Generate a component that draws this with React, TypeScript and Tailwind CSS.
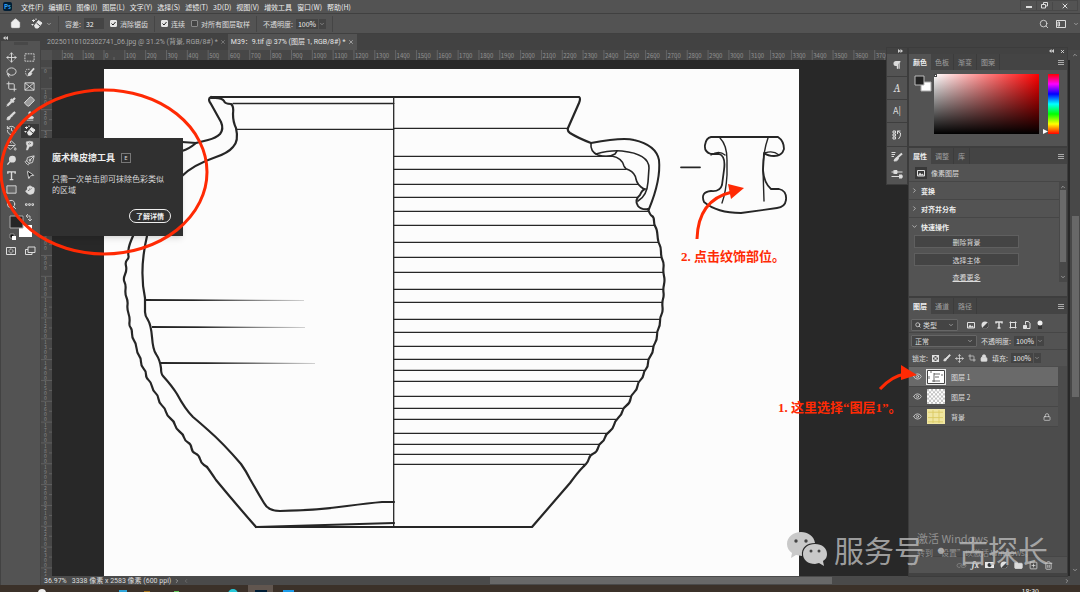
import type { ReactNode } from "react";
import {
  Bandage,
  Brush,
  ChevronDown,
  ChevronRight,
  ChevronUp,
  ChevronLeft,
  Crop,
  Ellipsis,
  Eye,
  Folder,
  Hand,
  History,
  House,
  Lasso,
  Link,
  Lock,
  MousePointer2,
  Move,
  PaintBucket,
  PenTool,
  Pilcrow,
  Pipette,
  Pointer,
  Search,
  SquareDashed,
  SquarePlus,
  Stamp,
  Trash2,
  X,
} from "lucide-react";

const menus = [
  "文件(F)", "编辑(E)", "图像(I)", "图层(L)", "文字(Y)", "选择(S)",
  "滤镜(T)", "3D(D)", "视图(V)", "增效工具", "窗口(W)", "帮助(H)",
];

const INK = "#262626";
const RULER_STEP = 20.83;

// outer edge of the vessel, left section and right elevation
const leftProfile: [number, number][] = [
  [133, 236], [129, 245], [128, 254], [129, 258], [125, 262], [127, 270], [123, 279], [126, 285],
  [125, 294], [128, 301], [127, 309], [130, 318], [129, 326], [132, 329], [132, 338], [136, 343],
  [137, 353], [141, 358], [141, 366], [146, 371], [146, 378], [151, 382], [153, 391], [158, 395],
  [159, 403], [165, 408], [167, 416], [174, 421], [176, 429], [183, 434], [185, 441], [191, 444],
  [192, 452], [199, 455], [201, 463], [207, 467],
];

const rightProfile: [number, number][] = [
  [648, 209], [650, 215], [654, 217], [654, 225], [657, 229], [658, 242], [661, 247], [661, 257],
  [664, 263], [663, 272], [665, 280], [663, 289], [664, 296], [662, 302], [663, 312], [660, 317],
  [660, 326], [657, 331], [657, 340], [653, 346], [653, 353], [648, 359], [648, 367], [644, 371],
  [643, 378], [638, 382], [637, 390], [631, 395], [630, 403], [623, 408], [622, 414], [615, 421],
  [613, 429], [606, 434], [604, 441], [599, 444], [597, 452], [590, 455], [588, 462], [584, 466],
];

// [y, right end] of every groove on the right half
const grooves = [
  [128, 568], [156, 613], [169, 626], [184, 638], [197, 637], [211, 649], [225, 654], [242, 658],
  [257, 661], [272, 663], [289, 663], [302, 662], [319, 660], [332, 657], [346, 653], [359, 648],
  [370, 644], [381, 638], [396, 631], [408, 623], [419, 616], [433, 607], [444, 599], [454, 590],
  [464, 585],
];

function smooth(points: [number, number][]) {
  let d = `M${points[0][0]} ${points[0][1]}`;
  for (let i = 1; i < points.length - 1; i++) {
    const [x, y] = points[i];
    const [nx, ny] = points[i + 1];
    d += ` Q${x} ${y} ${(x + nx) / 2} ${(y + ny) / 2}`;
  }
  const last = points[points.length - 1];
  return `${d} L${last[0]} ${last[1]}`;
}

function Drawing() {
  return (
    <svg
      className="block h-[507px] w-[695px] shrink-0 bg-[#fcfcfc]"
      viewBox="104 69 695 507"
      fill="none"
      stroke={INK}
      strokeLinejoin="round"
      strokeLinecap="round"
    >
      <defs>
        <linearGradient id="fade" x1="0" x2="1">
          <stop offset="0.3" stopColor={INK} />
          <stop offset="1" stopColor={INK} stopOpacity="0.2" />
        </linearGradient>
      </defs>
      <g strokeWidth="1.3">
        {grooves.map(([y, end]) => (
          <path key={y} d={`M394 ${y + 0.3}H${end}`} />
        ))}
        <path d="M233 103.5H394M237 129.3H394M393.7 97V526" />
      </g>
      <g strokeWidth="2.2">
        <path d="M212 97H579Q581 98 579 103L568 128Q567 131 570 133Q578 138 591 143" />
        <path d="M211 97Q207 99 211 104L221 122Q224 129 220 134Q216 138 208 140Q200 142 196 143L182 142" />
        <path d="M182 151Q189 149 196 143" />
        <path d="M211 98Q222 97 224 101Q225 104 231 104Q234 106 233 114Q233 122 236 128Q239 141 233 147Q228 153 216 157Q193 165 182 176" />
        <path d={smooth(leftProfile)} />
        <path d="M207 467Q210 471 216 480Q235 503 256 527" />
        <path d="M147 236Q139 270 145 298V312Q145 316 148 320Q151 325 152 337Q153 350 156 354Q160 360 161 368Q161 374 163 376Q172 386 177 394Q185 409 193 417Q199 422 208 430Q223 443 241 464Q246 471 250 479Q258 493 264 503Q268 511 280 511Q320 510 347 506Q370 503 382 502H394" />
        <path d="M256 527L394 523" />
        <path d="M256 527H532L570 483Q578 472 584 466" />
        <path d={smooth(rightProfile)} />
      </g>
      <g strokeWidth="2">
        <path d="M591 143Q623 137 634 140Q656 145 659 160Q661 180 649 209Q641 210 638 206Q634 200 640 195Q642 190 645 189" />
        <path d="M591 143Q590 152 598 155Q608 158 615 154L617 151" strokeWidth="1.6" />
        <path d="M596 154Q610 150 622 151Q649 154 649 168L648 182Q647 196 638 201" strokeWidth="1.6" />
        <path d="M612 156Q622 158 624 166Q625 169 629 170Q635 173 636 179Q637 185 644 189" strokeWidth="1.6" />
      </g>
      <g fill="url(#fade)" stroke="none">
        <path d="M146 299L304 300V301L146 301Z" />
        <path d="M152 326L305 327V328L152 328Z" />
        <path d="M160 362L315 363V364L160 364Z" />
      </g>
      <g strokeWidth="1.8">
        <path d="M681 167.3H700" />
        <path d="M711 137H778Q784 141 784 149Q782 156 774 156Q768 156 764 153L763 170Q764 183 771 189H779Q787 191 786 200Q785 207 777 208L741 213Q717 213 704 202Q700 192 711 191Q720 192 722 185L724 170Q726 156 719 154H711Q704 152 705 145Q706 138 711 137" />
        <path d="M720 138Q727 145 727 160V175Q726 192 722 203M768 138Q763 152 763 170L764 201M711 155Q719 150 725 155M765 153Q773 150 779 155" strokeWidth="1.4" />
      </g>
    </svg>
  );
}

function TopRuler() {
  const marks = Array.from({ length: 48 }, (_, i) => i - 2);
  return (
    <svg className="block h-[10px] min-w-0 flex-1 bg-[#474747]" fontSize="6" fill="#929292">
      {marks.map((n) => (
        <g key={n}>
          <path d={`M${52 + n * RULER_STEP} 0V10M${62 + n * RULER_STEP} 7V10`} stroke="#666" />
          <text x={53 + n * RULER_STEP} y="8">
            {Math.abs(n * 100)}
          </text>
        </g>
      ))}
    </svg>
  );
}

function SideRuler() {
  const marks = Array.from({ length: 25 }, (_, i) => i);
  return (
    <svg className="block h-full w-[11px] shrink-0 bg-[#474747]" fontSize="5" fill="#8a8a8a">
      {marks.map((n) => (
        <g key={n}>
          <path d={`M0 ${8 + n * RULER_STEP}H11M8 ${18 + n * RULER_STEP}H11`} stroke="#606060" />
          {String(n * 100).split("").map((digit, i) => (
            <text key={i} x="3" y={13 + n * RULER_STEP + i * 5}>
              {digit}
            </text>
          ))}
        </g>
      ))}
    </svg>
  );
}

function MagicEraser() {
  return (
    <svg className="h-3 w-3" viewBox="0 0 24 24" fill="none" stroke="#e8e8e8" strokeWidth="2">
      <path d="M7 15L15 5l7 5-8 10H9z" fill="#e8e8e8" />
      <path d="M11 10l7 6" stroke="#444" />
      <path d="M5 3v5M2 5h6M3 12v3M1 13h4M10 1v3" />
    </svg>
  );
}

const tool = "h-[11px] w-[11px]";
const solid = "h-[10px] w-[10px] fill-[#dcdcdc]";

const tools: { name: string; icon: ReactNode }[] = [
  { name: "移动", icon: <Move className={tool} /> },
  {
    name: "选框",
    icon: (
      <svg className={tool} viewBox="0 0 24 24" fill="none" stroke="currentColor" strokeWidth="2">
        <path d="M2 4h20v16H2z" strokeDasharray="4 2" />
      </svg>
    ),
  },
  { name: "套索", icon: <Lasso className={tool} /> },
  {
    name: "快速选择",
    icon: (
      <svg className={tool} viewBox="0 0 24 24" fill="none" stroke="currentColor" strokeWidth="2">
        <path d="M12 5H6Q2 9 4 15T10 19" strokeDasharray="3 2" />
        <path d="M22 3L14 12" strokeWidth="4" />
        <path d="M14 11q-5 1-5 8 7 0 8-5z" fill="currentColor" />
      </svg>
    ),
  },
  { name: "裁剪", icon: <Crop className={tool} /> },
  {
    name: "图框",
    icon: (
      <svg className={tool} viewBox="0 0 24 24" fill="none" stroke="currentColor" strokeWidth="2">
        <path d="M2 4h20v16H2zM2 4l20 16M22 4L2 20" />
      </svg>
    ),
  },
  { name: "吸管", icon: <Pipette className={solid} /> },
  { name: "修复画笔", icon: <Bandage className="h-[11px] w-[11px] -rotate-45 fill-[#999]" /> },
  { name: "画笔", icon: <Brush className={solid} /> },
  { name: "仿制图章", icon: <Stamp className={solid} /> },
  { name: "历史记录画笔", icon: <History className={tool} /> },
  { name: "魔术橡皮擦", icon: <MagicEraser /> },
  { name: "油漆桶", icon: <PaintBucket className={tool} /> },
  {
    name: "涂抹",
    icon: (
      <svg className={tool} viewBox="0 0 24 24" fill="currentColor" stroke="currentColor">
        <path d="M5 4q8-3 14 0 2 5-1 9-3 2-6 1l-4 8H5l2-9q-3-4-2-9z" />
        <path d="M9 8l3 1M12 6l3 2" stroke="#555" strokeWidth="2" />
      </svg>
    ),
  },
  {
    name: "减淡",
    icon: (
      <svg className={tool} viewBox="0 0 24 24" stroke="currentColor" strokeWidth="3">
        <circle cx="14" cy="9" r="6" fill="currentColor" />
        <path d="M9 14l-6 7" />
      </svg>
    ),
  },
  { name: "钢笔", icon: <PenTool className="h-[11px] w-[11px] rotate-90" /> },
  {
    name: "文字",
    icon: (
      <svg className={tool} viewBox="0 0 24 24" fill="none" stroke="currentColor" strokeWidth="3">
        <path d="M4 8V4h16v4M12 4v17M8 21h8" />
      </svg>
    ),
  },
  { name: "路径选择", icon: <MousePointer2 className="h-[10px] w-[10px] rotate-12 fill-[#222]" /> },
  {
    name: "矩形",
    icon: (
      <svg className={tool} viewBox="0 0 24 24" fill="#666" stroke="currentColor" strokeWidth="2">
        <path d="M2 4h20v16H2z" />
      </svg>
    ),
  },
  { name: "抓手", icon: <Hand className={solid} /> },
  { name: "缩放", icon: <Search className={tool} /> },
  { name: "更多", icon: <Ellipsis className="h-[11px] w-[11px] stroke-[4px]" /> },
];

function Toolbar() {
  return (
    <aside className="flex w-[41px] shrink-0 flex-col border-x border-[#424242] bg-[#535353] text-[#dcdcdc]">
      <div className="flex h-[7px] shrink-0 items-center bg-[#424242] pl-0.5">
        <DoubleArrow />
      </div>
      <div className="mx-auto mt-px h-[3px] w-[14px] shrink-0 bg-[#484848]" />
      <div className="mx-px mt-[5px] grid h-[162px] shrink-0 grid-cols-2 grid-rows-11">
        {tools.map(({ name, icon }) => (
          <button
            key={name}
            aria-label={name}
            className={
              name === "魔术橡皮擦"
                ? "flex min-h-0 items-center justify-center bg-[#383838]"
                : "flex min-h-0 items-center justify-center"
            }
          >
            {icon}
          </button>
        ))}
      </div>
      <svg className="mt-px ml-[7px] h-[28px] w-[26px] shrink-0" viewBox="0 0 26 28" fill="none" stroke="#dcdcdc">
        <path d="M11 12h13v12H11z" fill="#fff" stroke="none" />
        <path d="M2 3h13v12H2z" fill="#262626" stroke="#aaa" />
        <path d="M19 3h3v5M20 1l-2 2 2 2M20 6l2 2 2-2" strokeWidth="0.8" />
        <path d="M2 21h4v4H2z" fill="#111" strokeWidth="0.5" />
        <path d="M4 23h4v4H4z" fill="#fff" stroke="none" />
      </svg>
      <div className="mx-px mt-1 grid grid-cols-2">
        <button aria-label="快速蒙版" className="flex items-center justify-center">
          <svg className="h-3 w-3" viewBox="0 0 24 24" fill="none" stroke="currentColor" strokeWidth="2">
            <path d="M3 5h18v14H3z" />
            <circle cx="12" cy="12" r="4" strokeDasharray="2 1" />
          </svg>
        </button>
        <button aria-label="屏幕模式" className="flex items-center justify-center">
          <svg className="h-3 w-3" viewBox="0 0 24 24" fill="none" stroke="currentColor" strokeWidth="2">
            <path d="M8 4h14v11H8zM8 9H3v10h13v-4" />
          </svg>
        </button>
      </div>
    </aside>
  );
}

function DoubleArrow({ right = false }: { right?: boolean }) {
  return (
    <svg className="h-1 w-[5px]" viewBox="0 0 10 8" fill="#d0d0d0">
      <path d={right ? "M0 0l5 4-5 4zM5 0l5 4-5 4z" : "M5 0L0 4l5 4zM10 0L5 4l5 4z"} />
    </svg>
  );
}

function Check({ label, checked = false }: { label: string; checked?: boolean }) {
  return (
    <label className="flex items-center gap-[3px]">
      <span className="grid h-[7px] w-[7px]">
        <input
          type="checkbox"
          defaultChecked={checked}
          className="peer col-start-1 row-start-1 appearance-none rounded-[1px] border border-[#8a8a8a] bg-[#444] checked:border-[#e4e4e4] checked:bg-[#e4e4e4]"
        />
        <svg
          className="pointer-events-none col-start-1 row-start-1 hidden h-[7px] w-[7px] peer-checked:block"
          viewBox="0 0 14 14"
          fill="none"
          stroke="#222"
          strokeWidth="2"
        >
          <path d="M3 7l3 3 5-6" />
        </svg>
      </span>
      {label}
    </label>
  );
}

function Percent({ label, id }: { label: string; id: string }) {
  return (
    <div className="flex items-center gap-[3px]">
      <label htmlFor={id}>{label}</label>
      <div className="flex h-[10px] items-center bg-[#444] text-[#f0f0f0]">
        <input id={id} defaultValue="100%" className="h-full w-[22px] bg-transparent pl-0.5" />
        <span className="flex h-full w-[8px] items-center justify-center border-l border-[#555]">
          <ChevronDown className="h-[6px] w-[6px] text-[#bbb]" />
        </span>
      </div>
    </div>
  );
}

function Separator() {
  return <span className="h-4 w-px bg-[#454545]" />;
}

function PanelTabs({ names }: { names: string[] }) {
  return (
    <div className="flex h-4 shrink-0 items-stretch bg-[#444] text-[#a0a0a0]">
      {names.map((name, i) => (
        <button
          key={name}
          className={
            i === 0
              ? "bg-[#535353] px-1 font-bold text-[#eee]"
              : "border-r border-[#3c3c3c] px-1"
          }
        >
          {name}
        </button>
      ))}
      <svg className="mr-[3px] ml-auto h-[5px] w-[6px] self-center" viewBox="0 0 12 10" stroke="#aaa" strokeWidth="2">
        <path d="M0 1h12M0 5h12M0 9h12" />
      </svg>
    </div>
  );
}

function ColorPanel() {
  return (
    <section className="flex h-[94px] shrink-0 flex-col border-b-2 border-[#3e3e3e]">
      <PanelTabs names={["颜色", "色板", "渐变", "图案"]} />
      <div className="flex pt-1 pl-[5px]">
        <svg className="h-[18px] w-[18px]" viewBox="0 0 18 18">
          <path d="M7 8h10v9H7z" fill="#fff" stroke="#aaa" />
          <path d="M1 2h9v9H1z" fill="#222" stroke="#bbb" />
        </svg>
        <div className="ml-0.5 h-[60px] w-[105px] bg-[linear-gradient(to_bottom,transparent,#000),linear-gradient(to_right,#fff,#f00)]">
          <div className="h-[3px] w-[3px] border border-[#444] bg-white" />
        </div>
        <svg className="ml-1 h-[5px] w-[5px] self-end" viewBox="0 0 10 10">
          <path d="M0 0l10 5L0 10z" fill="#fff" />
        </svg>
        <div className="h-[60px] w-[11px] bg-[linear-gradient(to_bottom,#f00,#f0f,#00f,#0ff,#0f0,#ff0,#f00)]" />
      </div>
    </section>
  );
}

function PropertiesPanel() {
  return (
    <section className="flex h-[150px] shrink-0 flex-col border-b-2 border-[#3e3e3e]">
      <PanelTabs names={["属性", "调整", "库"]} />
      <div className="flex h-[18px] shrink-0 items-center gap-1 border-b border-[#464646] pl-1.5">
        <span className="flex h-3 w-3 items-center justify-center bg-[#383838]">
          <PictureIcon />
        </span>
        像素图层
      </div>
      <div className="flex">
        <div className="flex-1">
          {["变换", "对齐并分布"].map((name) => (
            <button
              key={name}
              className="flex h-[18px] w-full items-center gap-[3px] border-b border-[#464646] pl-0.5 font-bold text-[#eee]"
            >
              <ChevronRight className="h-[7px] w-[7px]" />
              {name}
            </button>
          ))}
          <button className="flex h-[17px] w-full items-center gap-[3px] pl-0.5 font-bold text-[#eee]">
            <ChevronDown className="h-[7px] w-[7px]" />
            快速操作
          </button>
          <div className="flex w-[110px] flex-col items-stretch gap-[5px] pl-[5px]">
            <button className="h-[13px] border border-[#5f5f5f] bg-[#444]">删除背景</button>
            <button className="h-[13px] border border-[#5f5f5f] bg-[#444]">选择主体</button>
            <a href="#more" className="text-center leading-[12px] underline">查看更多</a>
          </div>
        </div>
        <div className="flex h-[100px] w-2 flex-col items-center justify-between bg-[#484848] py-0.5">
          <ChevronUp className="h-[6px] w-[6px]" />
          <div className="mb-3 w-[6px] flex-1 bg-[#6a6a6a]" />
          <ChevronDown className="h-[6px] w-[6px]" />
        </div>
      </div>
    </section>
  );
}

function PictureIcon() {
  return (
    <svg className="h-2 w-2" viewBox="0 0 16 16" fill="none" stroke="#e0e0e0" strokeWidth="2">
      <path d="M1 3h14v11H1z" />
      <path d="M2 13l4-6 3 4 2-2 3 4z" fill="#e0e0e0" stroke="none" />
    </svg>
  );
}

function HalfCircle() {
  return (
    <svg className="h-2 w-2" viewBox="0 0 16 16">
      <circle cx="8" cy="8" r="7" fill="#e0e0e0" />
      <path d="M13 3A7 7 0 0 1 3 13z" fill="#444" />
    </svg>
  );
}

function Thumb({ kind }: { kind: string }) {
  return (
    <svg
      className={
        kind === "line"
          ? "h-4 w-5 border border-[#e8e8e8]"
          : "mx-px h-[15px] w-[18px]"
      }
      viewBox="0 0 18 14"
      preserveAspectRatio="none"
    >
      <defs>
        <pattern id="checker" width="4" height="4" patternUnits="userSpaceOnUse">
          <path d="M0 0h4v4H0z" fill="#fff" />
          <path d="M0 0h2v2H0zM2 2h2v2H2z" fill="#c4c4c4" />
        </pattern>
      </defs>
      <path
        d="M0 0h18v14H0z"
        fill={kind === "checker" ? "url(#checker)" : kind === "paper" ? "#f0e6a0" : "#fff"}
      />
      {kind === "line" && (
        <>
          <path d="M.5.5h17v13H.5z" fill="none" stroke="#444" />
          <path d="M7 3v9M7 4h6M8 7h4M5 11h8M3 2h2M2 6v3M15 4v2" stroke="#444" fill="none" strokeWidth="0.8" />
        </>
      )}
      {kind === "paper" && (
        <path d="M1 3h15M1 8h15M1 12h15M6 1v12M12 1v12" stroke="#d9c860" fill="none" strokeWidth="0.8" />
      )}
    </svg>
  );
}

const layers = [
  { name: "图层 1", kind: "line" },
  { name: "图层 2", kind: "checker" },
  { name: "背景", kind: "paper" },
];

function LayersPanel() {
  return (
    <section className="flex min-h-0 flex-1 flex-col">
      <PanelTabs names={["图层", "通道", "路径"]} />
      <div className="flex h-[19px] shrink-0 items-center border-b border-[#464646] pt-[3px] pl-[2px]">
        <div className="flex h-3 w-[47px] items-center rounded-[1px] border border-[#666] bg-[#444] px-[3px]">
          <Search className="h-[6px] w-[6px] shrink-0 stroke-[3px]" />
          <select aria-label="图层过滤" className="w-full appearance-none bg-transparent pl-0.5">
            <option>类型</option>
          </select>
          <ChevronDown className="h-[6px] w-[6px] shrink-0" />
        </div>
        <div className="ml-[9px] flex items-center gap-[6px]">
          <PictureIcon />
          <HalfCircle />
          <svg className="h-2 w-2" viewBox="0 0 16 16" fill="none" stroke="#e0e0e0" strokeWidth="3">
            <path d="M2 5V2h12v3M8 2v12M5 14h6" />
          </svg>
          <svg className="h-2 w-2" viewBox="0 0 16 16" fill="none" stroke="#e0e0e0" strokeWidth="2">
            <path d="M3 1v14M13 1v14M1 3h14M1 13h14" />
          </svg>
          <svg className="h-2 w-2" viewBox="0 0 16 16" fill="none" stroke="#e0e0e0" strokeWidth="2">
            <path d="M5 7V1h6l3 4v10H8" />
            <path d="M1 9h6v6H1z" fill="#e0e0e0" />
          </svg>
          <svg className="h-[10px] w-[6px]" viewBox="0 0 12 20">
            <path d="M2 4h8v14H2z" fill="#333" />
            <circle cx="6" cy="6" r="5" fill="#f0f0f0" />
          </svg>
        </div>
      </div>
      <div className="flex h-[17px] shrink-0 items-center gap-1 border-b border-[#464646] pl-[2px]">
        <div className="flex h-3 w-[66px] items-center rounded-[1px] border border-[#666] bg-[#444] px-[3px]">
          <select aria-label="混合模式" className="w-full appearance-none bg-transparent">
            <option>正常</option>
          </select>
          <ChevronDown className="h-[6px] w-[6px] shrink-0" />
        </div>
        <Percent label="不透明度:" id="layer-opacity" />
      </div>
      <div className="flex h-4 shrink-0 items-center gap-1 pl-[3px]">
        锁定:
        <svg className="h-[7px] w-[7px]" viewBox="0 0 14 14" fill="#e0e0e0">
          <path d="M0 0h14v14H0zM2 2v10h10V2z" fillRule="evenodd" />
          <path d="M2 2h3v3H2zM9 2h3v3H9zM5 5h4v4H5zM2 9h3v3H2zM9 9h3v3H9z" />
        </svg>
        <Brush className="h-2 w-2 fill-[#dcdcdc]" />
        <Move className="h-[9px] w-[9px]" />
        <Crop className="h-2 w-2" />
        <Lock className="h-2 w-2 fill-[#dcdcdc]" />
        <Percent label="填充:" id="layer-fill" />
      </div>
      <div className="min-h-0 flex-1 bg-[#4c4c4c] pt-px">
        <ul className="mr-[9px] bg-[#535353]">
          {layers.map(({ name, kind }, i) => (
            <li
              key={name}
              className={
                i === 0
                  ? "flex h-5 items-center border-b border-[#474747] bg-[#6a6a6a]"
                  : "flex h-5 items-center border-b border-[#474747]"
              }
            >
              <button aria-label="可见性" className="flex w-[17px] justify-center">
                <Eye className="h-[9px] w-[9px]" />
              </button>
              <Thumb kind={kind} />
              <span className="ml-[5px]">{name}</span>
              {kind === "paper" && <Lock className="mr-[7px] ml-auto h-2 w-2" />}
            </li>
          ))}
        </ul>
      </div>
      <div className="flex h-[17px] shrink-0 items-center justify-end gap-[6px] border-t border-[#464646] pr-[14px]">
        <Link className="h-[9px] w-[9px] rotate-45 text-[#888]" />
        <span className="font-serif text-[9px] font-bold italic">fx</span>
        <svg className="h-2 w-[9px]" viewBox="0 0 18 16">
          <path d="M0 2h18v12H0z" fill="#e8e8e8" />
          <circle cx="9" cy="8" r="4" fill="#333" />
        </svg>
        <HalfCircle />
        <Folder className="h-[9px] w-[9px] fill-[#dcdcdc]" />
        <SquarePlus className="h-[9px] w-[9px]" />
        <Trash2 className="h-[9px] w-[9px]" />
      </div>
      <div className="h-[3px] shrink-0 bg-[#424242]" />
    </section>
  );
}

function Dock() {
  return (
    <div className="flex h-[138px] w-[22px] flex-col border border-[#3c3c3c] bg-[#535353] text-[#dcdcdc]">
      <div className="flex h-[6px] items-center justify-end bg-[#424242] pr-1">
        <DoubleArrow right />
      </div>
      <button aria-label="段落" className="flex h-[23px] items-center justify-center border-b border-[#3e3e3e]">
        <Pilcrow className="h-[10px] w-[10px] fill-[#dcdcdc] stroke-[3px]" />
      </button>
      <button className="flex h-[23px] items-center justify-center border-b border-[#3e3e3e] font-serif text-[12px] italic">
        A
      </button>
      <button className="flex h-[23px] items-center justify-center border-b border-[#3e3e3e] text-[9px]">
        A|
      </button>
      <button aria-label="历史记录" className="flex h-6 items-center justify-center border-b border-[#3e3e3e]">
        <svg className="h-[10px] w-[10px]" viewBox="0 0 20 20" fill="none" stroke="currentColor" strokeWidth="2">
          <path d="M2 2h5v4H2zM2 8h5v4H2zM2 14h5v4H2z" />
          <path d="M11 2l6 4q1 7-4 12M11 8V2h6" />
        </svg>
      </button>
      <button aria-label="画笔设置" className="flex h-[19px] items-center justify-center">
        <svg className="h-3 w-3" viewBox="0 0 24 24" fill="none" stroke="currentColor" strokeWidth="2">
          <path d="M1 3h8M1 7h7M1 11h5" />
          <path d="M22 5l-9 8" strokeWidth="4" />
          <path d="M13 12q-6 2-7 8 6 1 9-4z" fill="currentColor" />
        </svg>
      </button>
      <button aria-label="画笔" className="flex h-4 items-center justify-center">
        <svg className="h-3 w-3" viewBox="0 0 24 24" fill="none" stroke="currentColor" strokeWidth="2">
          <path d="M1 8h22M1 17h22" />
          <path d="M6 4v8M7 5h5v6H7z" fill="currentColor" />
          <path d="M17 13v8M18 14h4v6h-4z" fill="currentColor" />
        </svg>
      </button>
    </div>
  );
}

function ToolTip() {
  return (
    <div className="absolute top-[138px] left-10 flex h-[98px] w-[143px] flex-col bg-[#303030] px-3 pt-[13px] pb-[13px] text-[#d8d8d8] shadow-md">
      <div className="flex items-center gap-1.5">
        <h2 className="text-[9px] leading-[13px] font-bold text-[#eee]">魔术橡皮擦工具</h2>
        <kbd className="flex h-[10px] w-[10px] items-center justify-center border border-[#777] font-sans text-[6px]">
          E
        </kbd>
      </div>
      <p className="mt-[9px] w-[114px] text-[8px] leading-[11px]">只需一次单击即可抹除色彩类似的区域</p>
      <button className="mt-auto flex h-[14px] shrink-0 items-center self-end rounded-full border border-[#eee] px-[6px] font-bold text-[#eee]">
        了解详情
      </button>
    </div>
  );
}

function Annotations() {
  return (
    <div className="pointer-events-none absolute inset-0 font-['Liberation_Serif','Noto_Sans_CJK_SC',serif] text-[13px] font-bold text-[#ff2a04]">
      <svg className="absolute top-0 left-0 h-[592px] w-[1080px]" fill="none" stroke="#ff2a04" strokeWidth="3">
        <ellipse cx="104" cy="172" rx="103" ry="82" />
        <path d="M697 239Q698 200 732 192M880 389Q892 376 905 374" />
        <path d="M744 188l-16-4 3 15zM917 375l-16-10v15z" fill="#ff2a04" stroke="none" />
      </svg>
      <p className="absolute top-[252px] left-[681px] whitespace-nowrap">2. 点击纹饰部位。</p>
      <p className="absolute top-[403px] left-[778px] whitespace-nowrap">1. 这里选择“图层1”。</p>
    </div>
  );
}

function Watermark() {
  return (
    <div className="pointer-events-none absolute right-[32px] bottom-[23px] flex items-center text-[30px] leading-10 whitespace-nowrap text-[#bdbdbd]/80">
      <svg className="mr-[7px] h-[34px] w-[40px]" viewBox="0 0 40 34">
        <path
          d="M14 0C6 0 0 5 0 12c0 4 2 7 5 9l-1 5 5-3 6 1C14 15 20 11 28 11 27 4 21 0 14 0z"
          fill="#c9c9c9"
        />
        <path
          d="M28 12c-7 0-12 4-12 10s5 10 12 10l4-1 5 3-1-5c3-2 4-4 4-7 0-6-5-10-12-10z"
          fill="#c9c9c9"
        />
        <g fill="#444">
          <circle cx="9" cy="9" r="1.7" />
          <circle cx="19" cy="9" r="1.7" />
          <circle cx="24" cy="19" r="1.5" />
          <circle cx="32" cy="19" r="1.5" />
        </g>
      </svg>
      <span>服务号</span>
      <span className="w-[34px] text-center">·</span>
      <span>古探长</span>
    </div>
  );
}

export default function App() {
  return (
    <div className="relative flex h-screen flex-col overflow-hidden bg-[#535353] font-['Noto_Sans_CJK_SC',sans-serif] text-[7px] leading-[10px] text-[#dcdcdc]">
      <header className="flex h-[14px] shrink-0 items-center border-b border-[#404040] pl-[3px]">
        <span className="flex h-[9px] w-[9px] items-center justify-center rounded-xs bg-[#001e36] text-[6px] font-bold text-[#31a8ff]">
          Ps
        </span>
        <nav className="flex gap-[5px] pl-[9px] text-[#eee]">
          {menus.map((name) => (
            <button key={name}>{name}</button>
          ))}
        </nav>
        <div className="mr-0.5 ml-auto flex h-[11px] items-center self-start border border-[#484848] text-[#ddd]">
          <button aria-label="最小化" className="flex h-full w-4 items-end justify-center border-r border-[#484848] pb-0.5">
            <span className="h-0.5 w-[6px] bg-[#ddd]" />
          </button>
          <button aria-label="还原" className="flex w-[15px] justify-center">
            <svg className="h-[7px] w-[7px]" viewBox="0 0 14 14" fill="none" stroke="currentColor" strokeWidth="2">
              <path d="M5 5V1h8v7H9M1 5h8v7H1z" />
            </svg>
          </button>
          <button aria-label="关闭" className="flex w-[25px] justify-center border-l border-[#484848]">
            <X className="h-2 w-2 stroke-[3px]" />
          </button>
        </div>
      </header>

      <div className="flex h-5 shrink-0 items-center gap-[6px] border-b border-[#404040] pl-[10px]">
        <button aria-label="主页">
          <House className="h-[11px] w-[11px] fill-[#eee]" />
        </button>
        <div className="ml-1 flex items-center gap-[3px]">
          <MagicEraser />
          <ChevronDown className="h-[6px] w-[6px]" />
        </div>
        <Separator />
        <label className="flex items-center gap-[3px]">
          容差:
          <input defaultValue="32" className="h-[11px] w-[20px] bg-[#444] pl-0.5 text-[#f0f0f0]" />
        </label>
        <Check label="消除锯齿" checked />
        <Separator />
        <Check label="连续" checked />
        <Check label="对所有图层取样" />
        <Separator />
        <Percent label="不透明度:" id="opacity" />
        <Separator />
        <div className="mr-px ml-auto flex items-center gap-[7px]">
          <Search className="h-[10px] w-[10px]" />
          <svg className="h-2 w-[10px]" viewBox="0 0 20 16" fill="none" stroke="#dcdcdc" strokeWidth="2">
            <path d="M1 1h18v14H1z" />
            <path d="M4 4h3v8H4z" />
          </svg>
          <ChevronDown className="h-[6px] w-[6px]" />
        </div>
      </div>

      <main className="flex min-h-0 flex-1">
        <Toolbar />
        <div className="flex min-w-0 flex-1 flex-col bg-[#424242]">
          <div className="flex h-4 shrink-0 font-['Roboto','Noto_Sans_CJK_SC',sans-serif] text-[#a4a4a4]">
            <button className="flex items-center gap-0.5 pr-0.5 pl-[6px]">
              20250110102302741_06.jpg @ 31.2% (背景, RGB/8#) *
              <X className="h-[6px] w-[6px]" />
            </button>
            <button className="flex items-center gap-[3px] bg-[#535353] px-[3px] text-[#e6e6e6]">
              M39：9.tif @ 37% (图层 1, RGB/8#) *
              <X className="h-[6px] w-[6px]" />
            </button>
          </div>
          <div className="flex min-h-0 flex-1">
            <div className="flex min-w-0 flex-1 flex-col">
              <div className="flex">
                <span className="w-[11px] bg-[#505050]" />
                <TopRuler />
              </div>
              <div className="flex min-h-0 flex-1 overflow-hidden bg-[#282828]">
                <SideRuler />
                <div className="pt-[9px] pl-[52px]">
                  <Drawing />
                </div>
              </div>
              <footer className="flex h-[9px] shrink-0 items-center bg-[#4a4a4a] pl-[3px] font-['Roboto','Noto_Sans_CJK_SC',sans-serif]">
                <span className="pr-[5px]">36.97%</span>
                <span>3338 像素 x 2583 像素 (600 ppi)</span>
                <ChevronRight className="mx-[3px] h-[6px] w-[6px]" />
                <ChevronLeft className="h-[6px] w-[6px] text-[#888]" />
                <span className="ml-auto h-[7px] w-1/3 bg-[#686868]" />
                <ChevronRight className="ml-[232px] h-[6px] w-[6px]" />
              </footer>
            </div>
            <div className="flex w-[10px] shrink-0 flex-col items-center bg-[#484848] pt-0.5 pb-3">
              <ChevronUp className="h-[6px] w-[6px]" />
              <div className="mt-[158px] h-[181px] w-[7px] bg-[#686868]" />
              <ChevronDown className="mt-auto h-[6px] w-[6px]" />
            </div>
          </div>
        </div>
      </main>

      <footer className="flex h-[7px] shrink-0 overflow-hidden bg-[#3b3129]">
        <svg className="h-[7px] w-[310px]">
          <path d="M248 0h25v7h-25z" fill="#61564f" />
          <circle cx="42" cy="8" r="4" fill="#eee" />
          <path d="M119 5h8v2h-8z" fill="#2fa4d8" />
          <path d="M144 6h6v1h-6z" fill="#a8761c" />
          <path d="M174 6h5v1h-5z" fill="#62c95b" />
          <circle cx="233" cy="9" r="5" fill="#28c8d8" />
          <path d="M255 5h12v2h-12z" fill="#001e36" />
          <path d="M283 5h11v2h-11z" fill="#1c9be8" />
        </svg>
        <time className="mr-[41px] ml-auto pt-px text-[#eee]">18:30</time>
      </footer>

      <div className="absolute top-[47px] right-[12px] bottom-[15px] flex items-start">
        <Dock />
        <aside className="flex h-full w-[160px] flex-col border border-[#3c3c3c] bg-[#535353]">
          <div className="flex h-[6px] shrink-0 items-center justify-end gap-[6px] bg-[#424242] pr-0.5">
            <DoubleArrow />
            <X className="h-[5px] w-[5px] stroke-[4px]" />
          </div>
          <ColorPanel />
          <PropertiesPanel />
          <LayersPanel />
        </aside>
      </div>

      <div className="pointer-events-none absolute top-[531px] left-[917px] whitespace-nowrap text-[#929292]">
        <p className="text-[11px] leading-[15px]">激活 Windows</p>
        <p className="text-[8px] leading-[13px]">转到“设置”以激活 Windows。</p>
      </div>

      <ToolTip />
      <Annotations />
      <Watermark />
    </div>
  );
}
